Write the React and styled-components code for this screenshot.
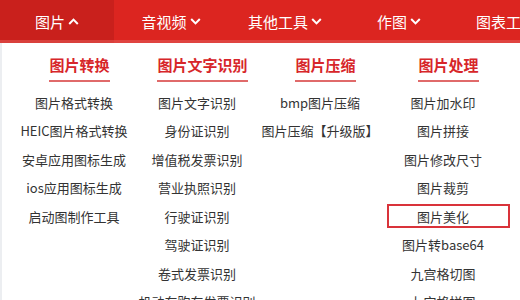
import styled, { createGlobalStyle } from "styled-components";

const GlobalStyle = createGlobalStyle`
    html, body {
        margin: 0;
        padding: 0;
        background: #ffffff;
        overflow: hidden;
    }
    body {
        font-family: "Noto Sans CJK SC", "Noto Sans", sans-serif;
    }
`;

const navItems = [
    { label: "图片", open: true },
    { label: "音视频" },
    { label: "其他工具" },
    { label: "作图" },
    { label: "图表工具" },
];

const columns = [
    {
        title: "图片转换",
        items: ["图片格式转换", "HEIC图片格式转换", "安卓应用图标生成", "ios应用图标生成", "启动图制作工具"],
    },
    {
        title: "图片文字识别",
        items: ["图片文字识别", "身份证识别", "增值税发票识别", "营业执照识别", "行驶证识别", "驾驶证识别", "卷式发票识别", "机动车购车发票识别"],
    },
    {
        title: "图片压缩",
        items: ["bmp图片压缩", "图片压缩【升级版】"],
    },
    {
        title: "图片处理",
        items: ["图片加水印", "图片拼接", "图片修改尺寸", "图片裁剪", "图片美化", "图片转base64", "九宫格切图", "九宫格拼图"],
        active: "图片美化",
    },
];

const Chevron = ({ up }) => (
    <svg width="11" height="7" viewBox="0 0 11 7">
        <path
            d={up ? "M1.2 6 L5.5 1.6 L9.8 6" : "M1.2 1 L5.5 5.4 L9.8 1"}
            fill="none"
            stroke="#fff"
            strokeWidth="2"
        />
    </svg>
);

const App = () => {
    return (
        <Page>
            <GlobalStyle />
            <NavBar>
                {navItems.map((n) => (
                    <NavItem key={n.label} $open={n.open}>
                        {n.label}
                        <Chevron up={n.open} />
                    </NavItem>
                ))}
            </NavBar>
            <Panel>
                {columns.map((c) => (
                    <Column key={c.title}>
                        <Heading>{c.title}</Heading>
                        <List>
                            {c.items.map((it) => (
                                <Item key={it} $active={c.active === it}>{it}</Item>
                            ))}
                        </List>
                    </Column>
                ))}
            </Panel>
        </Page>
    );
};

const Page = styled.div`
    width: 520px;
    height: 300px;
    overflow: hidden;
`;

const NavBar = styled.div`
    display: flex;
    height: 43px;
    background: #dc2520;
    box-shadow: inset 0 -3px 0 #e04440;
    white-space: nowrap;
`;

const NavItem = styled.div`
    flex: 0 0 114px;
    display: flex;
    align-items: center;
    justify-content: center;
    gap: 3px;
    padding-bottom: 1px;
    color: #fff;
    font-size: 15px;
    background: ${(p) => (p.$open ? "#c9201c" : "transparent")};
    box-shadow: ${(p) => (p.$open ? "inset 0 -3px 0 #d9403c" : "none")};
    svg {
        margin-top: 1px;
    }
`;

const Panel = styled.div`
    display: grid;
    grid-template-columns: repeat(4, 123px);
    padding: 11px 0 0 16px;
    border-left: 2px solid #eceef1;
    height: 300px;
`;

const Column = styled.div`
    display: flex;
    flex-direction: column;
    align-items: center;
`;

const Heading = styled.div`
    color: #d7262a;
    font-size: 15px;
    font-weight: bold;
    line-height: 21px;
    padding-bottom: 5px;
    border-bottom: 2px solid #e06a6a;
    margin-bottom: 6px;
`;

const List = styled.div`
    display: flex;
    flex-direction: column;
    align-self: stretch;
`;

const Item = styled.div`
    height: 28.5px;
    display: flex;
    align-items: center;
    justify-content: center;
    padding-right: 11px;
    font-size: 13px;
    color: #333;
    white-space: nowrap;
    box-sizing: border-box;
    ${(p) =>
        p.$active &&
        `
        height: 24px;
        margin: 2px 0 2.5px;
        border: 2px solid #d9333a;
    `}
`;

export default App;
